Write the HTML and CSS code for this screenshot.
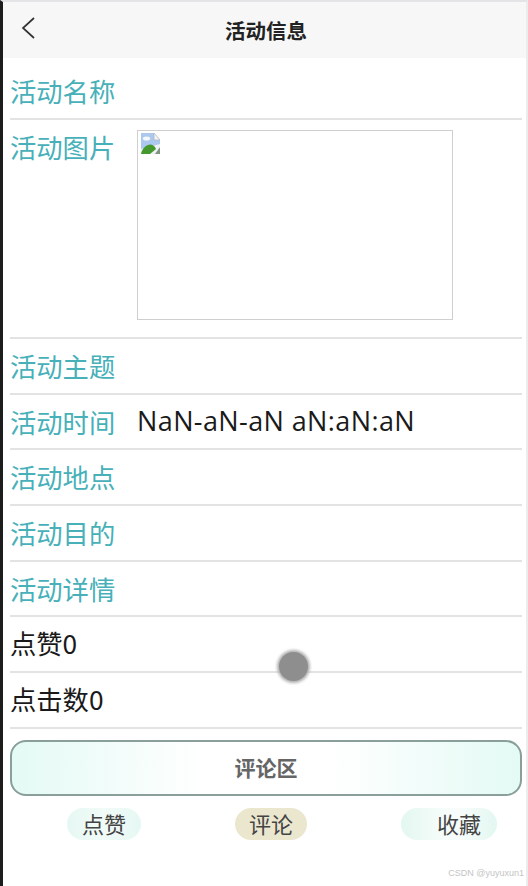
FILE: index.html
```html
<!DOCTYPE html>
<html lang="zh-CN">
<head>
    <meta charset="UTF-8">
    <meta name="viewport" content="width=device-width, initial-scale=1.0">
    <title>活动信息</title>
    <link rel="stylesheet" href="styles.css">
</head>
<body>
    <div class="page">
        <header class="nav-bar">
            <svg class="back-icon" width="16" height="26" viewBox="0 0 16 26">
                <path d="M14 3 L3 13 L14 23" fill="none" stroke="#333" stroke-width="1.7"/>
            </svg>
            <h1 class="nav-title">活动信息</h1>
        </header>

        <div class="info-list">
            <div class="info-row info-row-first"><span class="info-label">活动名称</span></div>
            <div class="info-row info-row-image">
                <span class="info-label">活动图片</span>
                <div class="image-box">
                    <svg class="broken-icon" width="21" height="23" viewBox="0 0 21 23">
                        <path d="M1 1 H14 L20 7 V22 H1 Z" fill="#eef1f6"/>
                        <path d="M1 1 H14 V8 H20 V12 L1 17 Z" fill="#adc8ee"/>
                        <path d="M14 1 V8 H20 Z" fill="#f3f4f5" stroke="#aeb4ba" stroke-width="0.7"/>
                        <ellipse cx="6.500" cy="6.500" rx="3.600" ry="2" fill="#f4f7fb"/>
                        <path d="M1 22 C2 16 7 12 11 12.500 C14 13 15 15 16 17 L10 22 Z" fill="#45982d"/>
                        <path d="M15 22 L20 15 V22 Z" fill="#7f9480"/>
                    </svg>
                </div>
            </div>
            <div class="info-row"><span class="info-label">活动主题</span></div>
            <div class="info-row">
                <span class="info-label">活动时间</span>
                <span class="info-value">NaN-aN-aN aN:aN:aN</span>
            </div>
            <div class="info-row"><span class="info-label">活动地点</span></div>
            <div class="info-row"><span class="info-label">活动目的</span></div>
            <div class="info-row"><span class="info-label">活动详情</span></div>
            <div class="info-row"><span class="info-plain">点赞0</span></div>
            <div class="info-row"><span class="info-plain">点击数0</span></div>
        </div>

        <div class="comment-bar">评论区</div>

        <div class="actions">
            <span class="action-btn action-like">点赞</span>
            <span class="action-btn action-comment">评论</span>
            <span class="action-btn action-fav">收藏</span>
        </div>
    </div>

    <div class="touch-dot"></div>
    <div class="watermark">CSDN @yuyuxun1</div>
</body>
</html>
```

FILE: styles.css
```css
* {
    box-sizing: border-box;
}

body {
    margin: 0;
    height: 886px;
    overflow: hidden;
    position: relative;
    background: #fff;
    font-family: "Noto Sans CJK SC", "Open Sans", sans-serif;
}

.page {
    height: 886px;
    border-left: 3px solid #1c1c1c;
    border-top: 2px solid #e4e4e6;
    border-right: 2px solid #ececec;
}

.nav-bar {
    height: 56px;
    background: #f7f7f7;
    display: flex;
    align-items: center;
    justify-content: center;
    position: relative;
}

.back-icon {
    position: absolute;
    left: 17px;
    top: 13px;
}

.nav-title {
    margin: 0 0 0 3px;
    font-size: 20.5px;
    font-weight: 700;
    color: #222;
}

.info-list {
    padding: 0 4px 0 7px;
}

.info-row {
    height: 55.7px;
    display: flex;
    align-items: center;
    border-bottom: 2px solid #e3e3e3;
}

.info-row-first {
    height: 62px;
    padding-top: 6px;
}

.info-row-image {
    height: 219px;
    align-items: flex-start;
    padding-top: 8px;
}

.info-label {
    width: 127px;
    flex-shrink: 0;
    font-size: 26.3px;
    line-height: 38px;
    color: #47b0b9;
}

.info-value {
    padding-bottom: 2px;
    font-family: "Open Sans", sans-serif;
    font-size: 27px;
    letter-spacing: 0.4px;
    color: #1a1a1a;
}

.info-plain {
    padding-bottom: 3px;
    font-size: 26.3px;
    color: #1a1a1a;
}

.image-box {
    width: 316px;
    height: 190px;
    margin-top: 2px;
    border: 1px solid #cfcfcf;
    padding: 1px 2px;
}

.broken-icon {
    display: block;
}

.comment-bar {
    height: 56px;
    margin: 11px 4px 0 7px;
    border: 2px solid #8a9f99;
    border-radius: 16px;
    background: linear-gradient(to right, #e4faf4, #fff 38%, #fff 62%, #e4faf4);
    display: flex;
    align-items: center;
    justify-content: center;
    padding-bottom: 1px;
    font-size: 21px;
    font-weight: 700;
    color: #666;
}

.actions {
    display: flex;
    margin-top: 12px;
}

.action-btn {
    height: 32px;
    width: 74px;
    padding-bottom: 2px;
    border-radius: 16px;
    display: flex;
    align-items: center;
    justify-content: center;
    font-size: 22px;
    color: #444;
}

.action-like {
    margin-left: 64px;
    background: linear-gradient(to right, #e6f8f3, #f1fbf8 50%, #e6f8f3);
}

.action-comment {
    margin-left: 94px;
    width: 72px;
    background: #ebe7cf;
}

.action-fav {
    margin-left: 94px;
    width: 96px;
    padding-left: 20px;
    background: linear-gradient(to right, #e3f7f1, #f4fcf9 40%, #f8fdfb 60%, #e3f7f1);
}

.touch-dot {
    position: absolute;
    left: 279px;
    top: 652px;
    width: 29px;
    height: 29px;
    border-radius: 50%;
    background: #8e8e8e;
    box-shadow: 0 0 3px 2px #b0b0b0;
}

.watermark {
    position: absolute;
    right: 4px;
    top: 868px;
    font-family: "Liberation Sans", sans-serif;
    font-size: 9px;
    color: #c4c4c4;
}
```
